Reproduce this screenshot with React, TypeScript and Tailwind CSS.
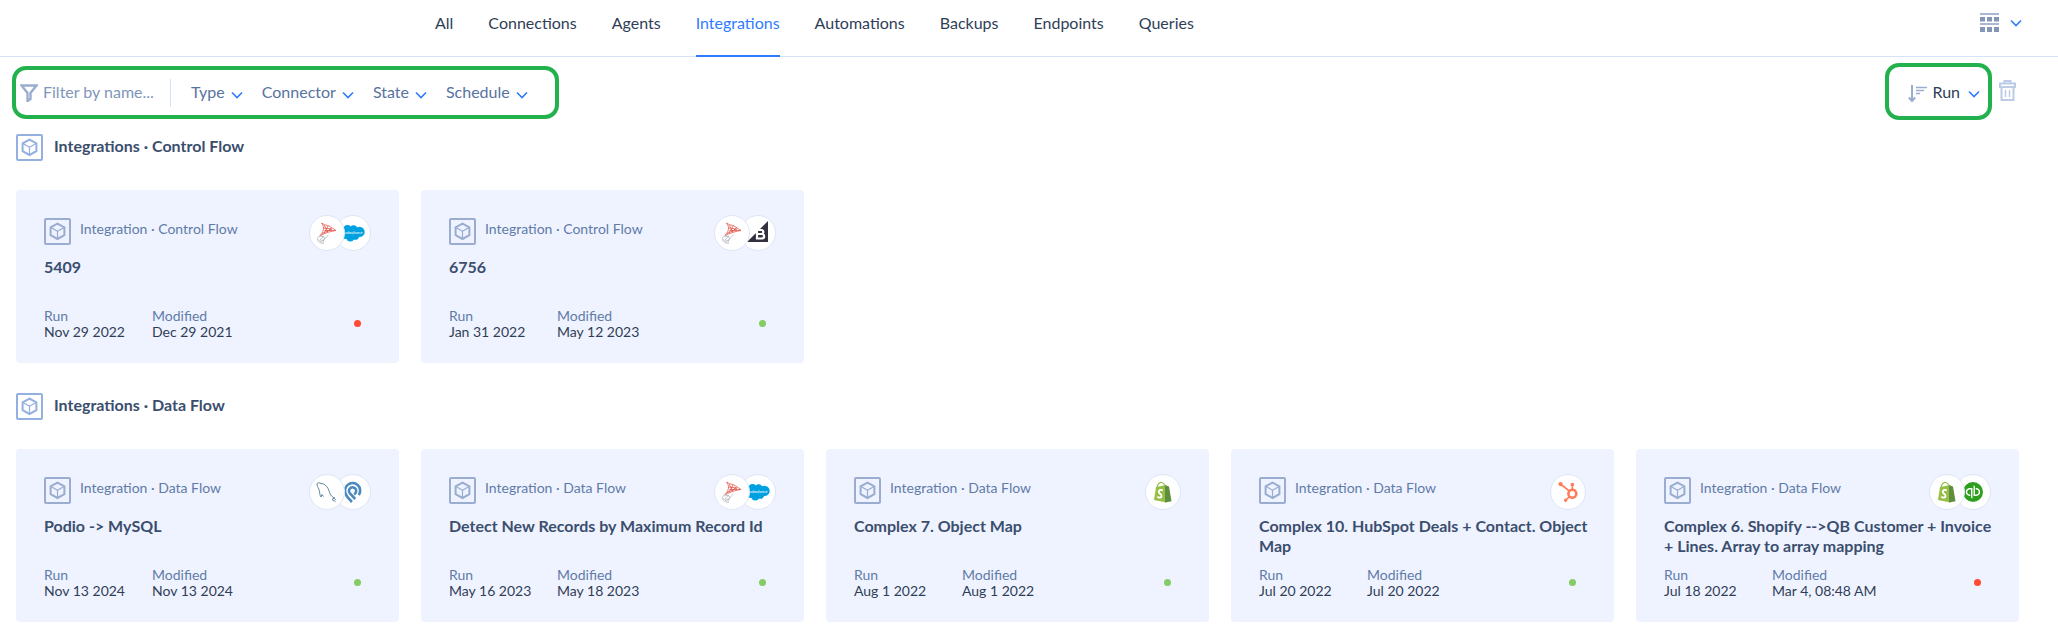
import type { ReactNode } from "react";
import { SiHubspot, SiQuickbooks } from "react-icons/si";

type Connector = "sqlserver" | "salesforce" | "bigcommerce" | "mysql" | "podio" | "shopify" | "hubspot" | "quickbooks";

type Integration = {
  title: string;
  run: string;
  modified: string;
  ok: boolean;
  connectors: Connector[];
};

const tabs = ["All", "Connections", "Agents", "Integrations", "Automations", "Backups", "Endpoints", "Queries"];
const filters = ["Type", "Connector", "State", "Schedule"];

const controlFlows: Integration[] = [
  { title: "5409", run: "Nov 29 2022", modified: "Dec 29 2021", ok: false, connectors: ["sqlserver", "salesforce"] },
  { title: "6756", run: "Jan 31 2022", modified: "May 12 2023", ok: true, connectors: ["sqlserver", "bigcommerce"] },
];

const dataFlows: Integration[] = [
  { title: "Podio -> MySQL", run: "Nov 13 2024", modified: "Nov 13 2024", ok: true, connectors: ["mysql", "podio"] },
  {
    title: "Detect New Records by Maximum Record Id",
    run: "May 16 2023",
    modified: "May 18 2023",
    ok: true,
    connectors: ["sqlserver", "salesforce"],
  },
  { title: "Complex 7. Object Map", run: "Aug 1 2022", modified: "Aug 1 2022", ok: true, connectors: ["shopify"] },
  {
    title: "Complex 10. HubSpot Deals + Contact. Object Map",
    run: "Jul 20 2022",
    modified: "Jul 20 2022",
    ok: true,
    connectors: ["hubspot"],
  },
  {
    title: "Complex 6. Shopify -->QB Customer + Invoice + Lines. Array to array mapping",
    run: "Jul 18 2022",
    modified: "Mar 4, 08:48 AM",
    ok: false,
    connectors: ["shopify", "quickbooks"],
  },
];

const Chevron = () => (
  <svg className="pointer-events-none h-2 w-3 shrink-0" viewBox="0 0 12 8" fill="none" stroke="#2f7bff" strokeWidth="1.6">
    <path d="M1 1.5 6 6.5 11 1.5" />
  </svg>
);

const CubeIcon = ({ className }: { className: string }) => (
  <svg className={`h-[27px] w-[27px] shrink-0 ${className}`} viewBox="0 0 27 27" fill="none" stroke="currentColor">
    <rect x="1" y="1" width="25" height="25" rx="1" strokeWidth="2" />
    <path d="M13.5 5.6 20.4 9.3V17.2L13.5 21 6.6 17.2V9.3Z" strokeWidth="2" />
    <path d="M7 9.6 13.5 13.2 20 9.6M13.5 13.2V20.6" strokeWidth="1.2" />
  </svg>
);

const logos: Record<Connector, ReactNode> = {
  sqlserver: (
    <svg className="h-[22px] w-[22px]" viewBox="0 0 22 22" fill="none">
      <path
        d="M5.5 1C8 2.5 9 3 12 3.5 15 5 18.5 7.5 20 8.5 15.5 9 9 11 4 13.5 6.5 11 7.5 8.5 7.5 6 7.5 4 6.5 2.5 5.5 1ZM7.5 6 16 7 6 11.5M8 3 12 10M12 4 8 11M15 6 11 10M8.5 8.5 19 8.5"
        stroke="#e2574c"
        strokeWidth=".8"
      />
      <path
        d="M4 13.5C2 14.5 1 16 1.5 18 2 20 5 21.5 7.5 21.5 6.5 19.5 8.5 17.5 12.5 12.5M3 15 8 14 4 18 8 18.5M5 13.5 9 16 5.5 20M2 17.5 6 20.5"
        stroke="#b3b6bb"
        strokeWidth=".7"
      />
    </svg>
  ),
  salesforce: (
    <svg className="h-[18px] w-6" viewBox="0 0 22 16">
      <g fill="#00a1e0">
        <circle cx="6" cy="5" r="4.3" />
        <circle cx="11.5" cy="4.8" r="3.8" />
        <circle cx="17" cy="7" r="4.7" />
        <circle cx="4.3" cy="9.5" r="4" />
        <circle cx="8.5" cy="12" r="3.8" />
        <circle cx="13" cy="10.5" r="3.8" />
      </g>
      <text x="11" y="9.3" textAnchor="middle" fontSize="4.2" fontStyle="italic" fill="#fff">
        salesforce
      </text>
    </svg>
  ),
  bigcommerce: (
    <svg className="mb-1 h-[22px] w-[22px]" viewBox="0 0 22 22">
      <path d="M21 1V22H0Z" fill="#34313f" />
      <path
        d="M10 10H14C17.2 10 17.2 14 14 14H10ZM10 14H14.5C18 14 18 18.5 14.5 18.5H10Z"
        fill="none"
        stroke="#fff"
        strokeWidth="2.2"
      />
    </svg>
  ),
  mysql: (
    <svg className="h-[22px] w-[22px]" viewBox="0 0 22 22" fill="none" stroke="#5d8399" strokeWidth="1">
      <path d="M5 16C3.5 14 3.8 11 3 8.5 2 6 .8 4.5 1 3 1.2 1.5 3.5 1.5 5 2.5 8.5 2.5 10.5 5 12 7.5 13.5 10 13.5 13 15.5 15 17.5 16.5 19 18 20 19M19 16.5 16 18.5 19.5 20.5M5 16 6 13.5 7.5 15.5" />
    </svg>
  ),
  podio: (
    <svg className="h-[22px] w-[22px]" viewBox="0 0 22 22" fill="none" stroke="#4a8abf" strokeWidth="2.6">
      <path d="M16.8 14A7.6 7.6 0 1 0 4.2 13.8Q5 16 10 21" />
      <path d="M12 13.2A3.6 3.6 0 1 0 7.8 12.2L13.2 18" />
    </svg>
  ),
  shopify: (
    <svg className="h-[22px] w-[22px]" viewBox="0 0 22 22">
      <path d="M5 6C6 2 8.5 .8 10 1.5 12 2 12.5 3.5 13 5" fill="none" stroke="#95bf47" strokeWidth="1.2" />
      <path d="M4 6 14.5 4V21.5L2 19Z" fill="#95bf47" />
      <path d="M13 4.2 17 5.5 19.5 20.3 13 21.5Z" fill="#5e8e3e" />
      <path
        d="M10.8 9.3C8.5 8.2 6.5 9.3 6.8 11 7 12.7 9.8 13 9.5 15 9.2 17 7 17 5.3 15.8"
        fill="none"
        stroke="#fff"
        strokeWidth="1.9"
      />
    </svg>
  ),
  hubspot: <SiHubspot className="h-5 w-5 text-[#ff7a59]" />,
  quickbooks: <SiQuickbooks className="h-5 w-5 text-[#2ca01c]" />,
};

const Card = ({ kind, item }: { kind: string; item: Integration }) => (
  <article className="flex h-[173px] flex-col rounded bg-[#eff3ff] px-7">
    <div className="flex h-[67px] pt-[25px]">
      <CubeIcon className="mt-[3px] text-[#9aadd0]" />
      <span className="ml-[9px] mt-1 text-sm leading-5 text-[#5f7ba8]">{kind}</span>
      <div className="ml-auto flex -space-x-[10px]">
        {item.connectors.map((c, i) => (
          <span
            key={c}
            className={`flex h-9 w-9 items-center justify-center rounded-full border border-[#dce6f5] bg-white ${i === 0 ? "z-10" : ""}`}
          >
            {logos[c]}
          </span>
        ))}
      </div>
    </div>
    <h3 className="-mr-2 h-[51px] text-base font-bold leading-5 text-[#3b4e6e]">{item.title}</h3>
    <dl className="flex text-sm leading-4 text-[#2f3e57]">
      <div className="w-[108px]">
        <dt className="text-[#5f7ba8]">Run</dt>
        <dd>{item.run}</dd>
      </div>
      <div>
        <dt className="text-[#5f7ba8]">Modified</dt>
        <dd>{item.modified}</dd>
      </div>
      <dd className={`ml-auto mr-[10px] mt-3 h-[7px] w-[7px] rounded-full ${item.ok ? "bg-[#84cc63]" : "bg-[#ff4b33]"}`} />
    </dl>
  </article>
);

const Section = ({ name, items }: { name: string; items: Integration[] }) => (
  <section className="flex flex-col gap-[29px]">
    <h2 className="flex items-center gap-[11px] text-base font-bold leading-5 text-[#3b4e6e]">
      <CubeIcon className="text-[#94b0e0]" />
      <span className="pb-1">Integrations · {name}</span>
    </h2>
    <div className="grid grid-cols-5 gap-[22px]">
      {items.map((item) => (
        <Card key={item.title} kind={`Integration · ${name}`} item={item} />
      ))}
    </div>
  </section>
);

export default function App() {
  return (
    <div className="min-h-screen bg-white font-['Lato',sans-serif] text-base text-[#2f3e57]">
      <header className="flex h-[57px] items-start justify-between border-b border-[#d6e2f7] pl-[435px] pr-9">
        <nav className="flex gap-[35px]">
          {tabs.map((tab) => (
            <a
              key={tab}
              href="#"
              className={`h-[57px] pt-[11px] leading-6 ${tab === "Integrations" ? "border-b-2 border-[#2f7bff] text-[#2f7bff]" : ""}`}
            >
              {tab}
            </a>
          ))}
        </nav>
        <button className="mt-[13px] flex items-center gap-[10px]" aria-label="Change view">
          <svg className="h-5 w-5" viewBox="0 0 20 20" fill="#8496b8">
            <path d="M0 0H19V2H0ZM0 10H19V12H0Z" fill="#a9b7d2" />
            <path d="M0 4H5V8.500H0ZM7 4H12V8.500H7ZM14 4H19V8.500H14ZM0 14H5V19H0ZM7 14H12V19H7ZM14 14H19V19H14Z" />
          </svg>
          <Chevron />
        </button>
      </header>

      <div className="flex h-[77px] items-start justify-between pl-3 pr-[42px] pt-[6px]">
        <div className="mt-[3px] flex h-[53px] items-center rounded-[14px] border-4 border-[#22b14c] pl-1 pr-[27px] text-[#5873a0]">
          <label className="flex items-center gap-[5px]">
            <svg className="h-[18px] w-[18px]" viewBox="0 0 18 18" fill="none" stroke="#9aadd0" strokeWidth="2.4">
              <path d="M1.5 1.5H16.5L10.5 9V15L7.5 17V9Z" />
            </svg>
            <input
              aria-label="Filter by name"
              placeholder="Filter by name..."
              className="w-[127px] pb-[2px] leading-5 outline-none placeholder:text-[#8096bb]"
            />
          </label>
          <div className="mr-5 h-7 w-px bg-[#d6e2f7]" />
          <div className="flex gap-[19px]">
            {filters.map((f) => (
              <label key={f} className="flex items-center gap-[6px]">
                <select aria-label={f} className="field-sizing-content appearance-none pb-[2px] leading-5 outline-none">
                  <option>{f}</option>
                </select>
                <span className="pt-1">
                  <Chevron />
                </span>
              </label>
            ))}
          </div>
        </div>

        <div className="flex items-start gap-[7px]">
          <label className="flex h-[57px] items-center rounded-[14px] border-4 border-[#22b14c] pl-[19px] pr-2">
            <svg className="mr-1 mt-1 h-[19px] w-5" viewBox="0 0 20 19" fill="none" stroke="#9aadd0">
              <path d="M4 1V17M.8 13.5 4 17 7.2 13.5" strokeWidth="2" />
              <path d="M8 3.5H19M8 6.5H16M8 9.5H12" strokeWidth="1.4" />
            </svg>
            <select aria-label="Sort by" className="field-sizing-content mr-2 appearance-none leading-5 outline-none">
              <option>Run</option>
            </select>
            <span className="pt-1">
              <Chevron />
            </span>
          </label>
          <button className="mt-[17px]" aria-label="Delete">
            <svg className="h-[21px] w-[17px]" viewBox="0 0 17 21" fill="none" stroke="#bccbe6" strokeWidth="2">
              <path d="M5.5 3.5V1H11.5V3.5M1 3.5H16V7H1ZM2.5 7V20H14.5V7" />
              <path d="M6.5 10V17M10.5 10V17" strokeWidth="1.5" />
            </svg>
          </button>
        </div>
      </div>

      <main className="flex flex-col gap-[30px] pl-4 pr-[39px]">
        <Section name="Control Flow" items={controlFlows} />
        <Section name="Data Flow" items={dataFlows} />
      </main>
    </div>
  );
}
